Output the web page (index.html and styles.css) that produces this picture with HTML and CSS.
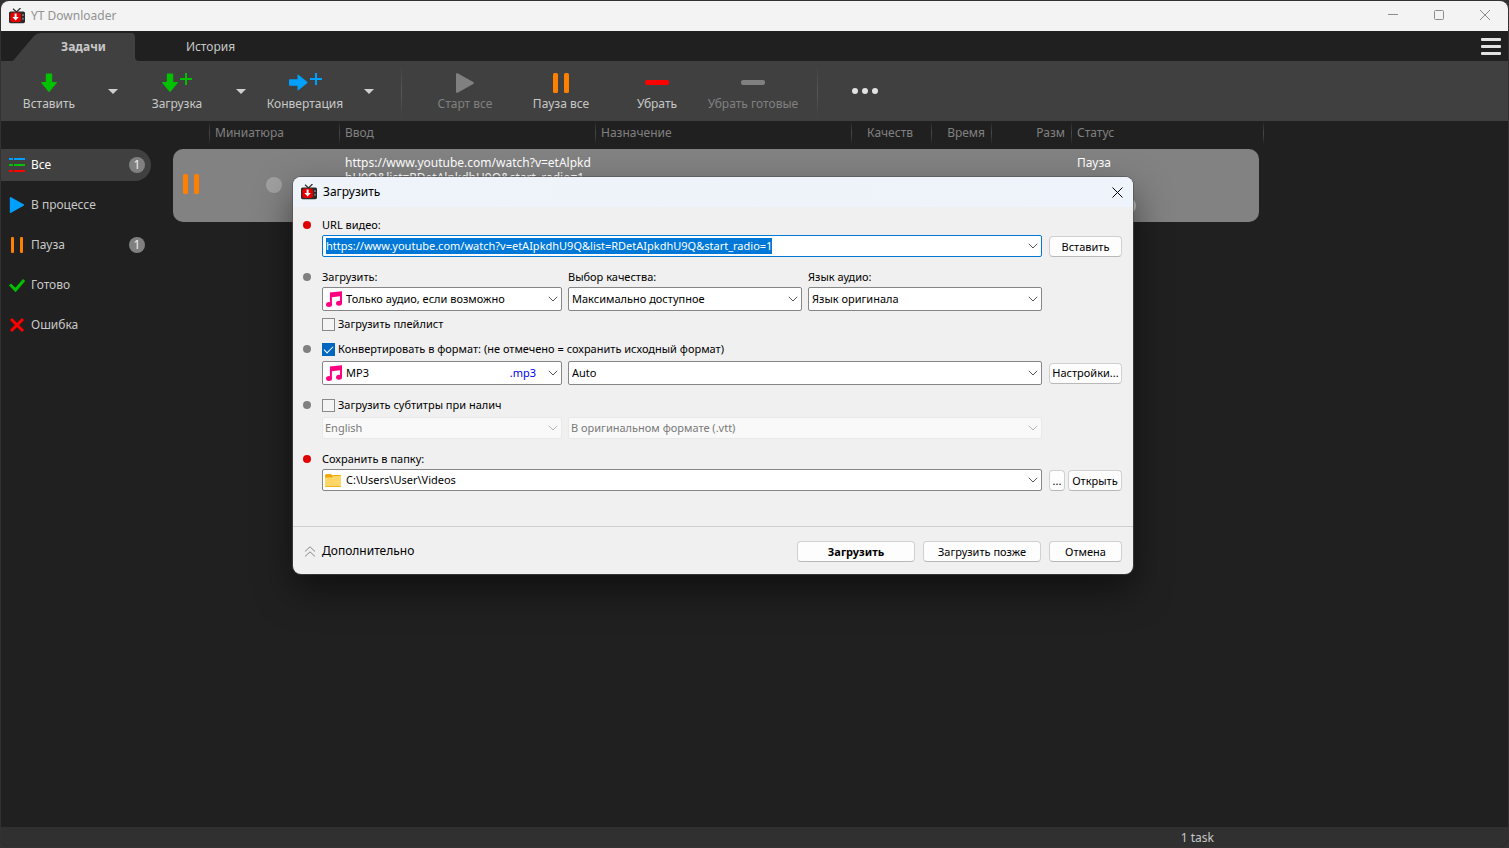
FILE: index.html
```html
<!DOCTYPE html>
<html lang="ru">
<head>
<meta charset="utf-8">
<title>YT Downloader</title>
<link rel="stylesheet" href="styles.css">
</head>
<body>
<svg class="sprite" aria-hidden="true">
  <symbol id="tv" viewBox="0 0 16 16">
    <path d="M4 0.8 7.5 4 11.5 0" fill="none" stroke="#2b2b2b" stroke-width="1.2"/>
    <rect x="0" y="3.4" width="16" height="11.8" rx="1.6" fill="#2b2b2b"/>
    <rect x="1.2" y="4.6" width="10.8" height="9.4" rx="2.6" fill="#e60000"/>
    <path d="M5.6 5.6h2v3.4h2.2L6.6 12.6 3.4 9h2.2z" fill="#fff"/>
    <rect x="13.2" y="6.2" width="1.5" height="1.8" fill="#8a8a8a"/>
    <rect x="13.2" y="9.8" width="1.5" height="1.8" fill="#8a8a8a"/>
  </symbol>
  <symbol id="arrow" viewBox="0 0 16 20">
    <path d="M5.6 0.5h4.8q.8 0 .8.8V9h4.2q.9.1.3.9L8.7 18.6q-.7.9-1.4 0L.3 9.9Q-.3 9.1.6 9h4.2V1.3q0-.8.8-.8z"/>
  </symbol>
  <symbol id="plus" viewBox="0 0 12 12"><path d="M5 0h2v5h5v2H7v5H5V7H0V5h5z"/></symbol>
  <symbol id="note" viewBox="0 0 16 16">
    <path d="M3.9 1.6 16 .2V12h-2V5.2L5.9 6.2v7h-2z" fill="#ff0080"/>
    <ellipse cx="3" cy="13.4" rx="3" ry="2.5" fill="#ff0080"/>
    <ellipse cx="13" cy="12.2" rx="3" ry="2.5" fill="#ff0080"/>
  </symbol>
  <symbol id="chev" viewBox="0 0 10 6"><path d="M.8.8 5 5 9.2.8" fill="none" stroke="currentColor" stroke-width="1"/></symbol>
  <symbol id="pause" viewBox="0 0 16 20"><rect x="0" y="0" width="5" height="20" rx="1.6"/><rect x="11" y="0" width="5" height="20" rx="1.6"/></symbol>
  <symbol id="play" viewBox="0 0 18 20"><path d="M0 1.2Q0-.3 1.6.3L17.2 9.1q1.4.9 0 1.8L1.6 19.7Q0 20.3 0 18.8z"/></symbol>
</svg>

<div class="window">
  <header class="titlebar">
    <svg class="app-icon"><use href="#tv"/></svg>
    <h1 class="title">YT Downloader</h1>
    <div class="win-controls">
      <button type="button" aria-label="Свернуть"><svg width="10" height="10" viewBox="0 0 10 10"><path d="M0 4.500h10"/></svg></button>
      <button type="button" aria-label="Развернуть"><svg width="10" height="10" viewBox="0 0 10 10"><rect x=".5" y=".5" width="9" height="9" rx="1"/></svg></button>
      <button type="button" aria-label="Закрыть"><svg width="10" height="10" viewBox="0 0 10 10"><path d="M0 0l10 10M10 0 0 10"/></svg></button>
    </div>
  </header>

  <nav class="tabs">
    <button type="button" class="tab active">
      <svg class="tab-shape" viewBox="0 0 127 28"><path d="M0 28Q2 27 3 25.500L22 3Q25 0 29 0h90q4 0 4 4v20q0 4 4 4z" fill="#404040"/></svg>
      <span>Задачи</span>
    </button>
    <button type="button" class="tab">История</button>
    <button type="button" class="menu" aria-label="Меню"><i></i><i></i><i></i></button>
  </nav>

  <div class="toolbar">
    <button type="button" class="tool green"><span class="ico"><svg width="16" height="20"><use href="#arrow"/></svg></span>Вставить</button>
    <button type="button" class="drop" aria-label="Ещё: Вставить"></button>
    <button type="button" class="tool green"><span class="ico"><svg width="16" height="20"><use href="#arrow"/></svg><svg class="plus" width="12" height="12"><use href="#plus"/></svg></span>Загрузка</button>
    <button type="button" class="drop" aria-label="Ещё: Загрузка"></button>
    <button type="button" class="tool blue"><span class="ico"><svg width="20" height="20" viewBox="0 0 20 20"><g transform="matrix(0 -1 1 0 0.500 17.500)"><path d="M5.600.5h4.800q.8 0 .8.8V9h4.200q.9.100.3.900L8.700 18.600q-.7.900-1.400 0L.3 9.900Q-.3 9.100.6 9h4.200V1.300q0-.8.8-.8z"/></g></svg><svg class="plus" width="12" height="12"><use href="#plus"/></svg></span>Конвертация</button>
    <button type="button" class="drop" aria-label="Ещё: Конвертация"></button>
    <span class="sep"></span>
    <button type="button" class="tool" disabled><span class="ico"><svg width="18" height="20"><use href="#play"/></svg></span>Старт все</button>
    <button type="button" class="tool orange"><span class="ico"><svg width="16" height="20"><use href="#pause"/></svg></span>Пауза все</button>
    <button type="button" class="tool red"><span class="ico"><svg width="24" height="5"><rect width="24" height="5" rx="2"/></svg></span>Убрать</button>
    <button type="button" class="tool" disabled><span class="ico"><svg width="24" height="5"><rect width="24" height="5" rx="2"/></svg></span>Убрать готовые</button>
    <span class="sep"></span>
    <button type="button" class="more" aria-label="Ещё"><svg width="26" height="6"><circle cx="3" cy="3" r="3"/><circle cx="13" cy="3" r="3"/><circle cx="23" cy="3" r="3"/></svg></button>
  </div>

  <div class="main">
    <aside class="sidebar">
      <button type="button" class="filter active"><svg width="16" height="14" viewBox="0 0 16 14"><path d="M0 1h4M5 1h11" stroke="#00a0ff" stroke-width="2"/><path d="M0 7h4M5 7h11" stroke="#00c000" stroke-width="2"/><path d="M0 13h4M5 13h11" stroke="#f00" stroke-width="2"/></svg><span>Все</span><b class="badge">1</b></button>
      <button type="button" class="filter"><svg width="16" height="16" viewBox="-1 0 20 20" fill="#00a0ff"><path d="M0 1.200Q0-.3 1.600.3L17.200 9.100q1.400.9 0 1.800L1.600 19.700Q0 20.300 0 18.800z"/></svg><span>В процессе</span></button>
      <button type="button" class="filter"><svg width="16" height="16" fill="#ff8000"><rect x="2" width="3" height="16" rx="1"/><rect x="11" width="3" height="16" rx="1"/></svg><span>Пауза</span><b class="badge">1</b></button>
      <button type="button" class="filter"><svg width="16" height="16" fill="none" stroke="#00c000" stroke-width="3"><path d="M1 7.500 6.500 13 15 3"/></svg><span>Готово</span></button>
      <button type="button" class="filter"><svg width="16" height="16" fill="none" stroke="#f00" stroke-width="3"><path d="M2 2l12 12M14 2 2 14"/></svg><span>Ошибка</span></button>
    </aside>

    <table class="tasks">
      <colgroup><col class="c-state"><col class="c-thumb"><col class="c-wide"><col class="c-wide"><col class="c-mid"><col class="c-time"><col class="c-mid"><col class="c-status"><col class="c-end"></colgroup>
      <thead>
        <tr><th class="first"></th><th>Миниатюра</th><th>Ввод</th><th>Назначение</th><th class="num quality">Качеств</th><th class="num">Время</th><th class="num">Разм</th><th>Статус</th><th></th></tr>
      </thead>
      <tbody>
        <tr>
          <td class="state"><svg width="16" height="20" fill="#ff8000"><use href="#pause"/></svg></td>
          <td class="thumb"><span class="dot"></span></td>
          <td class="url">https://www.youtube.com/watch?v=etAlpkd<br>hU9Q&amp;list=RDetAlpkdhU9Q&amp;start_radio=1</td>
          <td></td><td></td><td></td><td></td>
          <td class="status">Пауза<span class="dot"></span></td>
          <td class="blank"></td>
        </tr>
      </tbody>
    </table>
  </div>

  <footer class="statusbar">1 task</footer>
</div>

<section class="dialog" role="dialog" aria-labelledby="dlg-title">
  <header class="dlg-title">
    <svg class="app-icon"><use href="#tv"/></svg>
    <h2 id="dlg-title">Загрузить</h2>
    <button type="button" aria-label="Закрыть"><svg width="11" height="11" viewBox="0 0 11 11"><path d="M.5.5l10 10M10.500.5l-10 10"/></svg></button>
  </header>

  <form class="dlg-form">
    <div class="group">
      <i class="bullet required"></i>
      <label class="caption" for="url">URL видео:</label>
      <div class="field focus"><input id="url" type="text" value="https://www.youtube.com/watch?v=etAIpkdhU9Q&amp;list=RDetAIpkdhU9Q&amp;start_radio=1"><svg class="chev"><use href="#chev"/></svg></div>
      <div class="side low"><button type="button" class="btn">Вставить</button></div>
    </div>

    <div class="group">
      <i class="bullet"></i>
      <div class="trio">
        <label class="caption" for="what">Загрузить:</label>
        <label class="caption" for="quality">Выбор качества:</label>
        <label class="caption" for="lang">Язык аудио:</label>
        <div class="field tall"><svg class="note"><use href="#note"/></svg><select id="what"><option>Только аудио, если возможно</option></select><svg class="chev"><use href="#chev"/></svg></div>
        <div class="field tall"><select id="quality"><option>Максимально доступное</option></select><svg class="chev"><use href="#chev"/></svg></div>
        <div class="field tall"><select id="lang"><option>Язык оригинала</option></select><svg class="chev"><use href="#chev"/></svg></div>
        <label class="check below"><input type="checkbox">Загрузить плейлист</label>
      </div>
    </div>

    <div class="group spaced">
      <i class="bullet"></i>
      <label class="check"><input type="checkbox" checked>Конвертировать в формат: (не отмечено = сохранить исходный формат)</label>
      <div class="duo">
        <div class="field tall"><svg class="note"><use href="#note"/></svg><select aria-label="Формат"><option>MP3</option></select><span class="ext">.mp3</span><svg class="chev"><use href="#chev"/></svg></div>
        <div class="field tall"><select aria-label="Качество формата"><option>Auto</option></select><svg class="chev"><use href="#chev"/></svg></div>
      </div>
      <div class="side"><button type="button" class="btn">Настройки...</button></div>
    </div>

    <div class="group spaced">
      <i class="bullet"></i>
      <label class="check"><input type="checkbox">Загрузить субтитры при налич</label>
      <div class="duo">
        <div class="field off"><select aria-label="Язык субтитров" disabled><option>English</option></select><svg class="chev"><use href="#chev"/></svg></div>
        <div class="field off"><select aria-label="Формат субтитров" disabled><option>В оригинальном формате (.vtt)</option></select><svg class="chev"><use href="#chev"/></svg></div>
      </div>
    </div>

    <div class="group">
      <i class="bullet required"></i>
      <label class="caption" for="folder">Сохранить в папку:</label>
      <div class="field"><svg class="folder" width="16" height="13" viewBox="0 0 16 13"><path d="M0 2Q0 0 1.500 0H6l2 2H0z" fill="#f0a818"/><path d="M0 2h7l1.500-1H15q1 0 1 1v10q0 1-1 1H1q-1 0-1-1z" fill="#f2a900"/><path d="M0 3.500h7l1.500-1.500H16v9.500q0 .8-1 .8H1q-1 0-1-.8z" fill="#ffd668"/></svg><select id="folder"><option>C:\Users\User\Videos</option></select><svg class="chev"><use href="#chev"/></svg></div>
      <div class="side low"><button type="button" class="btn dots">...</button><button type="button" class="btn">Открыть</button></div>
    </div>
  </form>

  <footer class="dlg-footer">
    <button type="button" class="extra"><svg width="12" height="11" viewBox="0 0 12 11"><path d="M1 5.500 6 .8l5 4.700M1 10.500 6 5.800l5 4.700"/></svg>Дополнительно</button>
    <button type="button" class="btn wide strong">Загрузить</button>
    <button type="button" class="btn wide">Загрузить позже</button>
    <button type="button" class="btn cancel">Отмена</button>
  </footer>
</section>
<script src="app.js"></script>
</body>
</html>
```

FILE: styles.css
```css
* { box-sizing: border-box; }
body {
  margin: 0;
  height: 100vh;
  padding: 1px;
  background: #343132;
  font: 12px/16px "Noto Sans", sans-serif;
  color: #c8c8c8;
}
button, input, select { font: inherit; color: inherit; margin: 0; padding: 0; }
button { border: 0; background: none; }
svg { display: block; flex: none; }
h1, h2 { margin: 0; font-size: 12px; font-weight: 400; }
.sprite { position: absolute; width: 0; height: 0; }
.app-icon { width: 16px; height: 16px; }

.window {
  display: flex;
  flex-direction: column;
  height: 100%;
  background: #202020;
  border-radius: 8px;
  overflow: hidden;
}
.titlebar {
  display: flex;
  align-items: center;
  gap: 6px;
  height: 30px;
  padding-left: 8px;
  background: #f3f3f3;
  color: #929292;
}
.title { flex: 1; }
.win-controls { display: flex; align-self: stretch; padding-bottom: 2px; }
.win-controls button { width: 46px; display: grid; place-items: center; }
.win-controls svg { fill: none; stroke: #8c8c8c; }

.tabs { display: flex; align-items: flex-end; height: 30px; padding: 0 7px 0 11px; }
.tab { position: relative; width: 127px; height: 28px; padding-left: 16px; }
.tab.active { font-weight: 700; }
.tab span { position: relative; }
.tab-shape { position: absolute; inset: 0; width: 127px; height: 28px; }
.menu { margin-left: auto; width: 20px; height: 23px; display: flex; flex-direction: column; gap: 4px; }
.menu i { display: block; width: 20px; height: 3px; border-radius: 1px; background: #e3e3e3; }

.toolbar { display: flex; height: 60px; background: #404040; }
.tool {
  display: flex;
  flex-direction: column;
  align-items: center;
  gap: 2px;
  width: 96px;
  padding-top: 10px;
  white-space: nowrap;
}
.ico { display: flex; align-items: center; justify-content: center; gap: 2px; height: 23px; }
.plus { align-self: flex-start; margin-top: 2px; }
.tool:disabled { color: #808080; }
.tool svg { fill: #808080; }
.green svg { fill: #00c000; }
.blue svg { fill: #00a0ff; }
.orange svg { fill: #ff8000; }
.red svg { fill: #f00; }
.drop { width: 32px; display: grid; place-items: center; }
.drop::before {
  content: "";
  border: 5px solid transparent;
  border-top-color: #d0d0d0;
  border-bottom: 0;
}
.sep {
  width: 32px;
  background: linear-gradient(#404040, #585858, #404040) center / 1px 52px no-repeat;
}
.more { width: 64px; display: grid; place-items: center; }
.more svg { fill: #e3e3e3; }

.main { flex: 1; display: flex; align-items: flex-start; gap: 22px; min-height: 0; }
.sidebar { display: flex; flex-direction: column; gap: 8px; width: 150px; padding-top: 28px; }
.filter {
  display: flex;
  align-items: center;
  gap: 6px;
  height: 32px;
  padding: 0 6px 0 8px;
  border-radius: 0 16px 16px 0;
}
.filter.active { background: #404040; color: #fff; }
.badge {
  margin-left: auto;
  width: 16px;
  height: 16px;
  border-radius: 8px;
  background: #808080;
  color: #f0f0f0;
  font-weight: 400;
}

.tasks { table-layout: fixed; width: 1091px; border-collapse: separate; border-spacing: 0; }
.c-state { width: 36px; }
.c-thumb { width: 130px; }
.c-wide { width: 256px; }
.c-mid { width: 80px; }
.c-time { width: 60px; }
.c-status { width: 188px; }
.c-end { width: 5px; }
.tasks th {
  height: 28px;
  padding: 0 6px 4px;
  font-weight: 400;
  text-align: left;
  color: #808080;
  background: linear-gradient(#202020, #484848, #202020) left top / 1px 24px no-repeat;
}
.tasks th.first { background: none; }
.tasks th:last-child { padding: 0; background-position: right top; }
.tasks th.num { text-align: right; }
.tasks th.quality { padding-right: 18px; }
.tasks td { height: 73px; padding: 6px; vertical-align: top; background: #828282; color: #fff; }
.tasks .state { padding: 25px 0 0 10px; border-radius: 10px 0 0 10px; }
.tasks .thumb { padding: 28px 0 0 57px; }
.tasks .url { white-space: nowrap; line-height: 15px; }
.tasks .status { border-radius: 0 10px 10px 0; }
.tasks .blank { background: none; padding: 0; }
.dot { display: block; width: 16px; height: 16px; border-radius: 8px; background: #a0a0a0; }
.status .dot { margin: 27px 0 0 43px; background: #bcbcbc; }

.statusbar {
  display: flex;
  justify-content: flex-end;
  align-items: flex-end;
  height: 20px;
  padding: 0 294px 1px 0;
  background: #303030;
}

.dialog {
  position: absolute;
  left: 293px;
  top: 177px;
  width: 840px;
  border-radius: 8px;
  overflow: hidden;
  background: #f0f0f0;
  color: #000;
  font-size: 11px;
  box-shadow: 0 0 0 1px rgba(80, 80, 80, .6), 0 16px 36px rgba(0, 0, 0, .5);
}
.dlg-title {
  display: flex;
  align-items: center;
  gap: 6px;
  height: 30px;
  padding: 0 10px 0 8px;
  background: linear-gradient(90deg, #eef4f9, #eff3fb);
}
.dlg-title h2 { flex: 1; }
.dlg-title button svg { fill: none; stroke: #000; }

.dlg-form { display: flex; flex-direction: column; gap: 11px; padding: 9px 11px 35px 10px; }
.group {
  display: grid;
  grid-template-columns: 9px 1fr 73px;
  grid-template-rows: 19px auto;
}
.group > .bullet { grid-column: 1; margin-top: 5px; }
.group > :not(.bullet) { grid-column: 2; margin: 0 7px 0 10px; }
.group > .side { grid-column: 3; margin: 0; }
.group.spaced { row-gap: 2px; }
.bullet { width: 8px; height: 8px; border-radius: 4px; background: #808080; }
.bullet.required { background: #e00000; }
.caption { line-height: 18px; }
.group > .trio { grid-row: 1 / span 2; }
.trio { display: grid; grid-template-columns: 240px 1fr 1fr; grid-template-rows: 19px 24px; column-gap: 6px; }
.duo { display: grid; grid-template-columns: 240px 1fr; column-gap: 6px; }
.check { display: flex; align-items: center; gap: 3px; height: 18px; white-space: nowrap; }
.check.below { margin: 4px 0 -4px; }
.check input {
  appearance: none;
  width: 13px;
  height: 13px;
  border: 1px solid #8a8a8a;
  background: #f4f4f4;
}
.check input:checked {
  border-color: #0067c0;
  background: #0067c0;
  display: grid;
  place-items: center;
}
.check input:checked::before {
  content: "";
  width: 8px;
  height: 4px;
  margin-bottom: 2px;
  border: solid #fff;
  border-width: 0 0 1px 1px;
  rotate: -45deg;
}

.field {
  display: flex;
  align-items: center;
  height: 22px;
  padding: 0 3px;
  border: 1px solid #868686;
  border-radius: 2px;
  background: #fff;
}
.field.tall { height: 24px; }
.field.focus { border-color: #0078d4; }
.field input, .field select {
  appearance: none;
  flex: 1;
  min-width: 0;
  height: 16px;
  line-height: 16px;
  border: 0;
  outline: 0;
  background: none;
  opacity: 1;
}
.field input::selection { background: #0078d7; color: #fff; }
.field.off { padding-left: 2px; border-color: #e8e8e8; background: #f9f9f9; color: #7a7a7a; }
.chev { width: 10px; height: 6px; color: #555; }
.off .chev { color: #b8b8b8; }
.note { width: 16px; height: 16px; margin-right: 4px; }
.folder { margin: 0 5px 0 -1px; }
.ext { margin-right: 12px; color: #00e; }

.side { display: flex; align-items: center; gap: 3px; }
.side.low { align-items: flex-end; }
.btn {
  flex: 1;
  height: 21px;
  border: 1px solid #d0d0d0;
  border-bottom-color: #b8b8b8;
  border-radius: 4px;
  background: #fdfdfd;
  white-space: nowrap;
}
.btn.dots { flex: 0 0 16px; }
.dlg-footer {
  display: flex;
  gap: 8px;
  padding: 14px 11px 12px;
  border-top: 1px solid #cfcfcf;
}
.dlg-footer .btn { flex: none; }
.extra { display: flex; align-items: center; gap: 6px; height: 20px; margin-right: auto; font-size: 12px; }
.extra svg { fill: none; stroke: #888; }
.btn.wide { width: 118px; }
.btn.strong { font-weight: 700; }
.btn.cancel { width: 73px; }
```

FILE: app.js
```js
const url = document.getElementById("url");
url.focus();
url.select();
```
